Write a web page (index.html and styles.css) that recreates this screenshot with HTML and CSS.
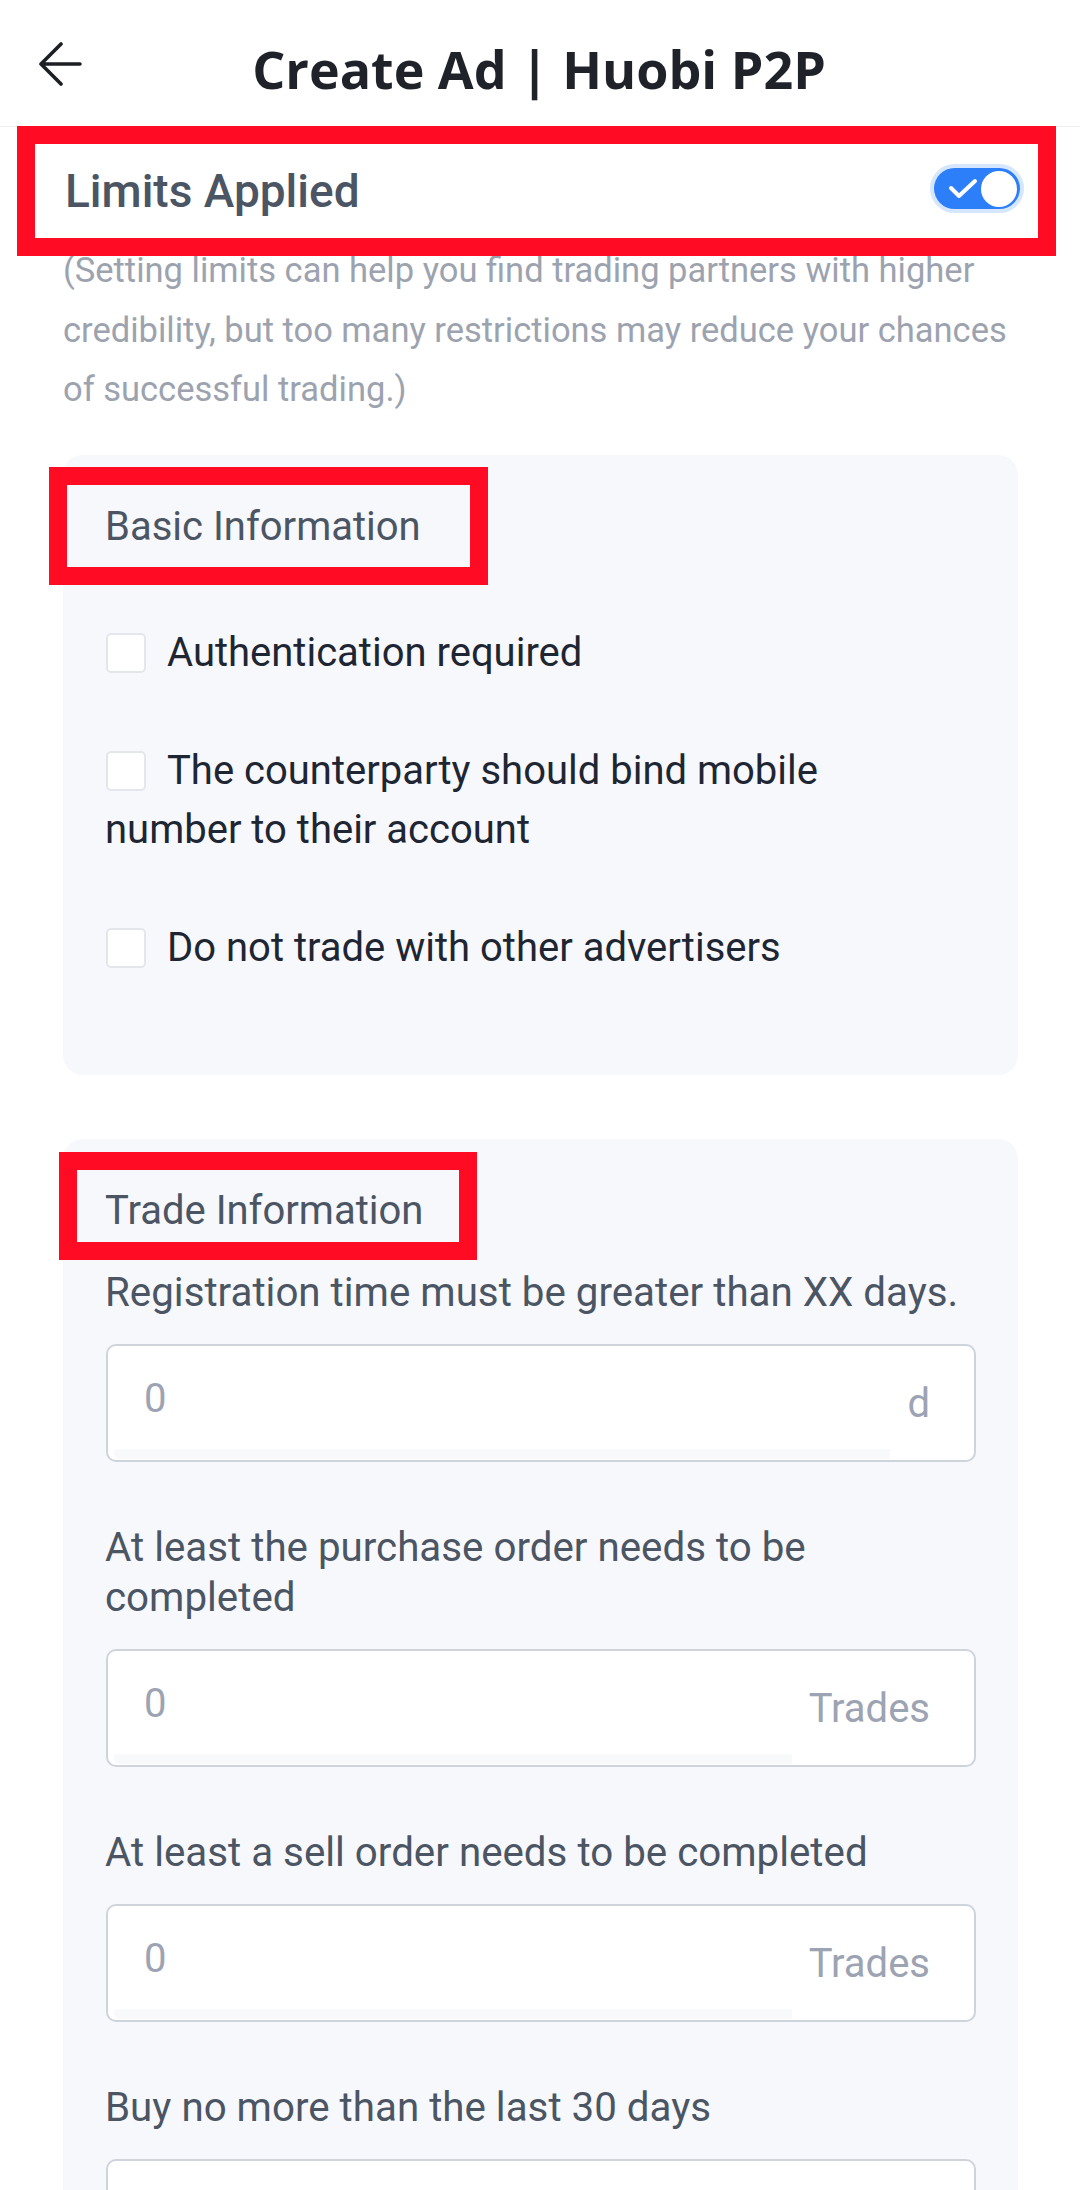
FILE: index.html
```html
<!DOCTYPE html>
<html lang="en">
<head>
    <meta charset="UTF-8">
    <meta name="viewport" content="width=device-width, initial-scale=1.0">
    <title>Create Ad | Huobi P2P</title>

    <link rel="stylesheet" href="styles.css">
</head>
<body>

<!-- Top bar -->
<div class="top-bar">
    <svg class="back-icon" width="44" height="44" viewBox="0 0 44 44">
        <path d="M23 2 L3 22 L23 42 M3 22 H42" fill="none" stroke="#1c1f24" stroke-width="3.6" stroke-linecap="round" stroke-linejoin="round"/>
    </svg>
    <h1 class="top-title">Create Ad | Huobi P2P</h1>
    <span class="top-spacer"></span>
</div>

<div class="page">

    <!-- Limits switch -->
    <div class="limits-row">
        <span class="limits-title">Limits Applied</span>
        <div class="toggle">
            <svg width="30" height="22" viewBox="0 0 30 22">
                <path d="M3 10 L11 18 L27 3" fill="none" stroke="#fff" stroke-width="4" stroke-linecap="round" stroke-linejoin="round"/>
            </svg>
            <span class="toggle-knob"></span>
        </div>
        <div class="mark mark-limits"></div>
    </div>

    <p class="limits-note">
        (Setting limits can help you find trading partners with higher credibility, but too many restrictions may reduce your chances of successful trading.)
    </p>

    <!-- Basic info -->
    <div class="card">
        <div class="mark mark-basic"></div>
        <div class="card-title">Basic Information</div>
        <div class="check-list">
            <div class="check-item"><span class="check-box"></span>Authentication required</div>
            <div class="check-item"><span class="check-box"></span>The counterparty should bind mobile number to their account</div>
            <div class="check-item"><span class="check-box"></span>Do not trade with other advertisers</div>
        </div>
    </div>

    <!-- Trade info -->
    <div class="card card-trade">
        <div class="mark mark-trade"></div>
        <div class="card-title title-trade">Trade Information</div>

        <div class="field-label">Registration time must be greater than XX days.</div>
        <div class="field">
            <div class="field-value">0</div>
            <div class="field-unit">d</div>
        </div>

        <div class="field-label">At least the purchase order needs to be completed</div>
        <div class="field">
            <div class="field-value">0</div>
            <div class="field-unit">Trades</div>
        </div>

        <div class="field-label">At least a sell order needs to be completed</div>
        <div class="field">
            <div class="field-value">0</div>
            <div class="field-unit">Trades</div>
        </div>

        <div class="field-label">Buy no more than the last 30 days</div>
        <div class="field">
            <div class="field-value"></div>
        </div>
    </div>

</div>

</body>
</html>
```

FILE: styles.css
```css
body {
    margin: 0;
    background: #fff;
    font-family: Roboto, "Liberation Sans", sans-serif;
}

/* Top bar */
.top-bar {
    display: flex;
    align-items: flex-start;
    height: 127px;
    box-sizing: border-box;
    padding: 0 40px 0 38px;
    border-bottom: 1px solid #eceef1;
}

.back-icon {
    margin-top: 42px;
    flex-shrink: 0;
}

.top-title {
    flex: 1;
    margin: 31px 0 0;
    text-align: center;
    font-family: "Open Sans", "Noto Sans", sans-serif;
    font-weight: 700;
    font-size: 52px;
    line-height: 76px;
    color: #1f2329;
}

.top-spacer {
    width: 44px;
    flex-shrink: 0;
}

.page {
    padding: 0 62px 0 63px;
}

/* red annotation frames */
.mark {
    position: absolute;
    border: 18px solid #ff0b24;
    box-sizing: border-box;
    pointer-events: none;
}

.mark-limits {
    left: -46px;
    top: -1px;
    width: 1039px;
    height: 130px;
}

.mark-basic {
    left: -14px;
    top: 12px;
    width: 439px;
    height: 118px;
}

.mark-trade {
    left: -4px;
    top: 13px;
    width: 418px;
    height: 108px;
}

/* Limits switch */
.limits-row {
    position: relative;
    display: flex;
    justify-content: space-between;
    align-items: flex-start;
    height: 114px;
    box-sizing: border-box;
    padding: 36px 0 0 2px;
}

.limits-title {
    font-size: 46px;
    font-weight: 500;
    line-height: 56px;
    color: #4b5563;
}

.toggle {
    display: flex;
    align-items: center;
    justify-content: space-between;
    width: 86px;
    height: 41px;
    box-sizing: border-box;
    margin: 5px -2px 0 0;
    padding: 0 3px 0 14px;
    border-radius: 21px;
    background: #2d7ff9;
    box-shadow: 0 0 0 4px #d6e7fd;
}

.toggle-knob {
    width: 36px;
    height: 36px;
    border-radius: 50%;
    background: #fff;
}

.limits-note {
    margin: 0 0 35px;
    font-size: 34.5px;
    line-height: 59.5px;
    color: #9ca3af;
}

/* Cards */
.card {
    position: relative;
    background: #f7f8fc;
    border-radius: 20px;
    padding: 47px 42px 98px;
}

.card-trade {
    margin-top: 64px;
}

.card-title {
    font-size: 40px;
    line-height: 50px;
    color: #4b5563;
    margin-bottom: 71px;
}

.title-trade {
    margin-bottom: 32px;
}

.check-list {
    display: flex;
    flex-direction: column;
    gap: 59px;
    padding-right: 40px;
}

.check-item {
    font-size: 40px;
    line-height: 59px;
    color: #1f2633;
}

.check-box {
    display: inline-block;
    width: 40px;
    height: 40px;
    box-sizing: border-box;
    margin: 0 21px 0 1px;
    border: 2px solid #e3e6eb;
    border-radius: 5px;
    background: #fff;
    vertical-align: middle;
    position: relative;
    top: -2px;
}

/* Trade fields */
.field-label {
    font-size: 40.3px;
    line-height: 50px;
    color: #4b5563;
    margin-bottom: 26px;
}

.field {
    display: flex;
    align-items: flex-start;
    height: 118px;
    box-sizing: border-box;
    margin: 0 0 61px 1px;
    border: 2px solid #cfd4dc;
    border-radius: 10px;
    background: #fff;
    font-size: 40px;
    line-height: 50px;
    color: #9ca3b2;
}

.field-value {
    flex: 1;
    height: 113px;
    box-sizing: border-box;
    margin-left: 6px;
    padding: 28px 0 0 30px;
    border-bottom: 10px solid #f8f9fb;
    border-bottom-left-radius: 6px;
}

.field-unit {
    padding: 33px 44px 0 17px;
}
```
